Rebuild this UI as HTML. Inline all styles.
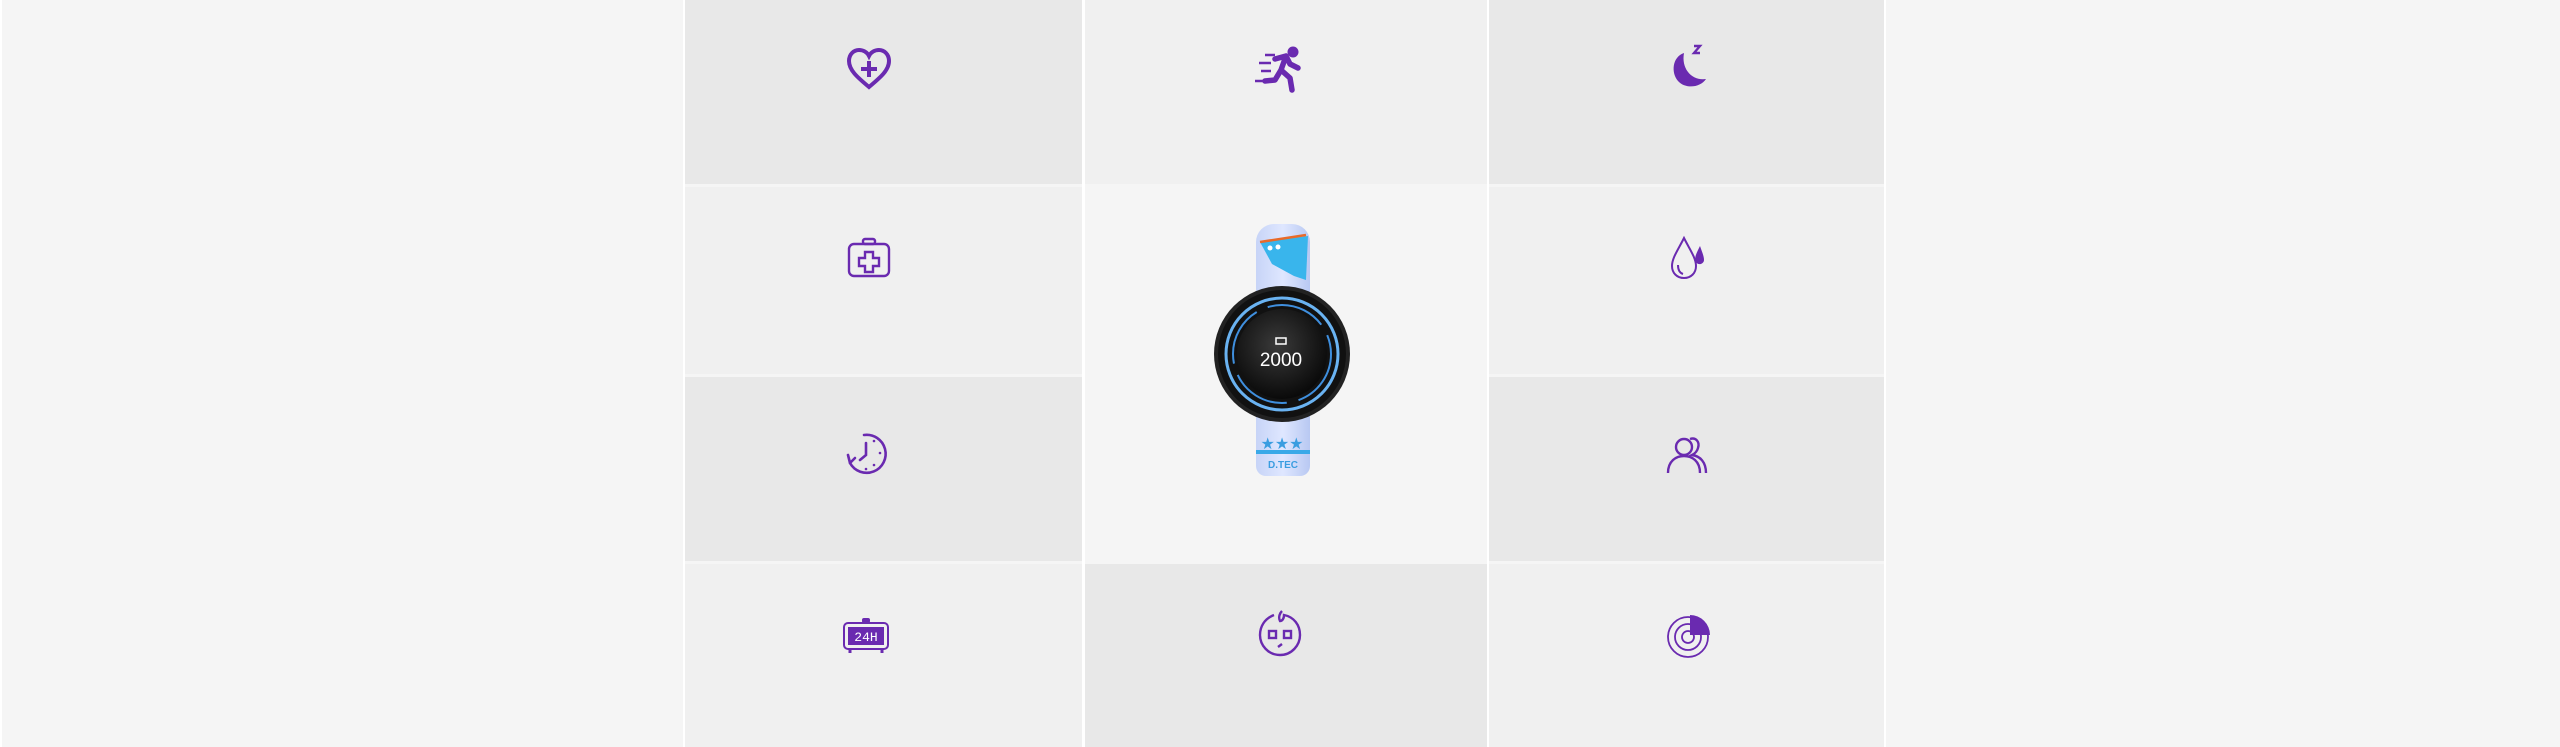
<!DOCTYPE html>
<html><head><meta charset="utf-8"><style>
html,body{margin:0;padding:0}
body{width:2560px;height:747px;background:#f5f5f5;position:relative;overflow:hidden;font-family:"Liberation Sans",sans-serif}
.c{position:absolute}
.ic{position:absolute;width:52px;height:52px;margin:-26px 0 0 -26px}
</style></head><body>
<div class="c" style="left:0;top:0;width:2px;height:747px;background:#fff"></div>
<div class="c" style="left:685px;top:0;width:397px;height:184px;background:#e8e8e8"></div>
<div class="c" style="left:1085px;top:0;width:402px;height:184px;background:#f0f0f0"></div>
<div class="c" style="left:1489px;top:0;width:395px;height:184px;background:#e8e8e8"></div>
<div class="c" style="left:685px;top:187px;width:397px;height:187px;background:#f0f0f0"></div>
<div class="c" style="left:1085px;top:187px;width:402px;height:374px;background:#f5f5f5"></div>
<div class="c" style="left:1489px;top:187px;width:395px;height:187px;background:#f0f0f0"></div>
<div class="c" style="left:685px;top:377px;width:397px;height:184px;background:#e8e8e8"></div>
<div class="c" style="left:1489px;top:377px;width:395px;height:184px;background:#e8e8e8"></div>
<div class="c" style="left:685px;top:564px;width:397px;height:183px;background:#f0f0f0"></div>
<div class="c" style="left:1085px;top:564px;width:402px;height:183px;background:#e8e8e8"></div>
<div class="c" style="left:1489px;top:564px;width:395px;height:183px;background:#f0f0f0"></div>
<div class="c" style="left:683px;top:0;width:2px;height:747px;background:#fff"></div>
<div class="c" style="left:1082px;top:0;width:3px;height:747px;background:#fff"></div>
<div class="c" style="left:1487px;top:0;width:2px;height:747px;background:#fff"></div>
<div class="c" style="left:1884px;top:0;width:2px;height:747px;background:#fff"></div>

<svg class="ic" style="left:869px;top:69px" viewBox="0 0 52 52"><path d="M26 44 C14 34 6 27 6 18 C6 11 11 7 16 7 C20 7 24 9 26 13 C28 9 32 7 36 7 C41 7 46 11 46 18 C46 27 38 34 26 44Z" fill="none" stroke="#6a2ab0" stroke-width="4"/><path d="M26 18v16M18 26h16" stroke="#6a2ab0" stroke-width="4"/></svg>
<svg class="ic" style="left:1279px;top:69px" viewBox="0 0 52 52"><g stroke="#6a2ab0" stroke-width="2.5" fill="none"><path d="M12 12h10M6 20h12M8 28h10M2 38h10"/></g><circle cx="40" cy="9" r="5.5" fill="#6a2ab0"/><path d="M22 16 L33 13 L37 21 L45 25 M33 13 L28 27 L37 35 L39 47 M28 27 L22 37 L12 38" stroke="#6a2ab0" stroke-width="5.5" fill="none" stroke-linecap="round" stroke-linejoin="round"/></svg>
<svg class="ic" style="left:1690px;top:67px" viewBox="0 0 52 52"><path d="M20 12 C8 16 7 32 14 40 C21 48 36 47 42 38 C28 40 17 28 20 12Z" fill="#6a2ab0"/><path d="M30 5h6l-6 7h6" stroke="#6a2ab0" stroke-width="2.4" fill="none"/></svg>
<svg class="ic" style="left:869px;top:258px" viewBox="0 0 52 52"><g stroke="#6a2ab0" stroke-width="2.4" fill="none"><rect x="6" y="12" width="40" height="32" rx="5"/><rect x="20" y="7" width="12" height="5" rx="2"/><path d="M22 20h8v6h6v8h-6v6h-8v-6h-6v-8h6z"/></g></svg>
<svg class="ic" style="left:1688px;top:258px" viewBox="0 0 52 52"><g stroke="#6a2ab0" stroke-width="2" fill="none"><path d="M22 6 C16 18 10 26 10 34 C10 41 15 46 22 46 C29 46 34 41 34 34 C34 26 28 18 22 6Z"/><path d="M16 33 C16 38 18 41 21 42"/></g><path d="M38 14 C34 22 32 26 34 30 C36 34 42 32 42 28 C42 24 40 20 38 14Z" fill="#6a2ab0"/></svg>
<svg class="ic" style="left:866px;top:453px" viewBox="0 0 52 52"><g stroke="#6a2ab0" stroke-width="2.6" fill="none" stroke-linecap="round"><path d="M24 8 A19 19 0 1 1 10 36"/><path d="M10 36 L8 28 M10 36 L15 31"/><path d="M26 16v12l-6 5"/></g><g fill="#6a2ab0"><circle cx="34" cy="14" r="1.3"/><circle cx="40" cy="26" r="1.3"/><circle cx="34" cy="38" r="1.3"/><circle cx="26" cy="42" r="1.3"/></g></svg>
<svg class="ic" style="left:1688px;top:455px" viewBox="0 0 52 52"><g stroke="#6a2ab0" stroke-width="2.4" fill="none"><circle cx="22" cy="18" r="8"/><path d="M6 44 C6 32 14 27 22 27 C30 27 38 32 38 44"/><path d="M28 10 C34 8 38 13 36 19 C35 23 32 25 30 26 C38 27 44 33 44 44"/></g></svg>
<svg class="ic" style="left:866px;top:635px" viewBox="0 0 52 52"><g stroke="#6a2ab0" stroke-width="2" fill="none"><rect x="4" y="14" width="44" height="26" rx="4"/></g><rect x="8" y="18" width="36" height="18" fill="#6a2ab0"/><rect x="22" y="9" width="8" height="5" rx="2" fill="#6a2ab0"/><path d="M10 40v4M42 40v4" stroke="#6a2ab0" stroke-width="3"/><text x="26" y="32" font-size="13" fill="#fff" text-anchor="middle" font-family="Liberation Mono,monospace">24H</text></svg>
<svg class="ic" style="left:1280px;top:633px" viewBox="0 0 52 52"><g stroke="#6a2ab0" stroke-width="2.4" fill="none"><path d="M20 8 C10 12 6 20 6 28 C6 38 14 48 26 48 C38 48 46 38 46 28 C46 18 40 10 30 8 C30 12 28 14 26 14 C24 10 26 6 28 4"/><rect x="15" y="24" width="7" height="7"/><rect x="30" y="24" width="7" height="7"/><path d="M24 40l4-3"/></g></svg>
<svg class="ic" style="left:1690px;top:635px" viewBox="0 0 52 52"><g stroke="#6a2ab0" stroke-width="1.8" fill="none"><circle cx="24" cy="28" r="20"/><circle cx="24" cy="28" r="13"/><circle cx="24" cy="28" r="6"/></g><path d="M26 6 A20 20 0 0 1 46 26 L26 26Z" fill="#6a2ab0"/></svg>

<svg class="c" style="left:1210px;top:220px" width="145" height="262" viewBox="0 0 145 262">
<defs><linearGradient id="bd" x1="0" x2="1"><stop offset="0" stop-color="#c7d4f7"/><stop offset=".5" stop-color="#dfe7ff"/><stop offset="1" stop-color="#b8c8f2"/></linearGradient>
<radialGradient id="fc" cx=".45" cy=".4" r=".6"><stop offset="0" stop-color="#3a3a3a"/><stop offset="1" stop-color="#0a0a0a"/></radialGradient></defs>
<rect x="46" y="4" width="54" height="90" rx="18" fill="url(#bd)"/>
<path d="M50 22 L98 16 L96 60 L84 56 L62 44 Z" fill="#39b5ec"/>
<path d="M50 22 L96 15" stroke="#e86a2a" stroke-width="2.5"/>
<circle cx="60" cy="28" r="2.5" fill="#fff"/><circle cx="68" cy="27" r="2.5" fill="#fff"/>
<rect x="46" y="186" width="54" height="70" rx="10" fill="url(#bd)"/>
<rect x="46" y="230" width="54" height="4" fill="#39a9e8"/>
<text x="73" y="248" font-size="10" fill="#3a9de0" text-anchor="middle" font-weight="bold">D.TEC</text>
<text x="72" y="229" font-size="16" fill="#3a9de0" text-anchor="middle">★★★</text>
<circle cx="72" cy="134" r="68" fill="#222"/>
<circle cx="72" cy="134" r="64" fill="#111"/>
<circle cx="72" cy="134" r="56" fill="none" stroke="#6ab3f2" stroke-width="3"/>
<circle cx="72" cy="134" r="49" fill="none" stroke="#3f8fde" stroke-width="2" stroke-dasharray="60 12"/>
<circle cx="72" cy="134" r="45" fill="url(#fc)"/>
<rect x="66" y="118" width="10" height="6" fill="none" stroke="#fff" stroke-width="1.5"/>
<text x="71" y="146" font-size="19" fill="#fff" text-anchor="middle" font-family="Liberation Sans Narrow,Liberation Sans,sans-serif">2000</text>
</svg>
</body></html>
